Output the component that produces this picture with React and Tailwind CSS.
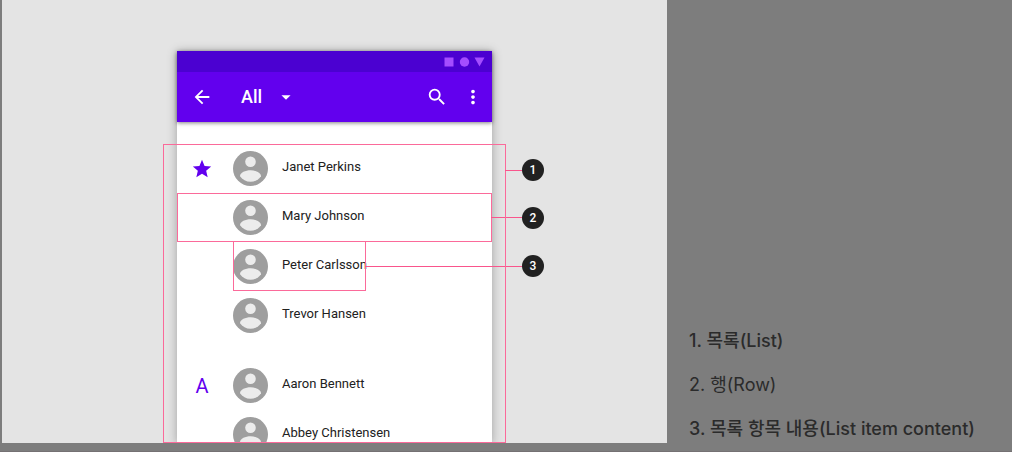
import React, { useState } from "react";
import {
  MdArrowBack,
  MdArrowDropDown,
  MdMoreVert,
  MdSearch,
  MdStar,
} from "react-icons/md";

const contacts = [
  { name: "Janet Perkins", group: "star" },
  { name: "Mary Johnson", marker: "row" },
  { name: "Peter Carlsson", marker: "content" },
  { name: "Trevor Hansen", last: true },
  { name: "Aaron Bennett", group: "A" },
  { name: "Abbey Christensen" },
];

const legend = [
  { text: "1. 목록(List)", strong: true },
  { text: "2. 행(Row)", strong: false },
  { text: "3. 목록 항목 내용(List item content)", strong: true },
];

function Avatar() {
  return (
    <svg viewBox="0 0 35 35" className="w-[35px] h-[35px] shrink-0" aria-hidden="true">
      <circle cx="17.5" cy="17.5" r="17.5" fill="#9e9e9e" />
      <circle cx="17.5" cy="10.7" r="5.3" fill="#ececec" />
      <path
        d="M7 25.2c0-3.6 5.6-5.9 10.5-5.9S28 21.6 28 25.2c-2.4 3.5-6.2 5.5-10.5 5.5S9.4 28.7 7 25.2z"
        fill="#ececec"
      />
    </svg>
  );
}

function Callout({ number, lineClass }) {
  return (
    <div className="flex items-center">
      <div className={`h-px bg-[#f9558c] ${lineClass}`} />
      <span className="w-[22px] h-[22px] rounded-full bg-[#212121] text-white text-[12px] font-medium flex items-center justify-center">
        {number}
      </span>
    </div>
  );
}

function StatusBar() {
  return (
    <div className="h-[21px] bg-[#4b01d1] flex items-center justify-end pr-[7px]">
      <svg viewBox="0 0 41 10" className="w-[41px] h-[10px]" fill="#a44dff" aria-hidden="true">
        <rect x="0.5" y="0.5" width="9" height="9" />
        <circle cx="20.5" cy="5" r="4.7" />
        <path d="M30.5 0.5h10L35.5 9.5z" />
      </svg>
    </div>
  );
}

function AppBar() {
  const [filter, setFilter] = useState("All");

  return (
    <div className="h-[50px] bg-[#6200ee] text-white flex items-center pl-[14px] pr-2">
      <button type="button" aria-label="Back">
        <MdArrowBack className="w-[22px] h-[22px]" />
      </button>
      <div className="relative ml-7 w-14">
        <select
          aria-label="Filter contacts"
          value={filter}
          onChange={(e) => setFilter(e.target.value)}
          className="block w-full appearance-none bg-transparent text-[18px] leading-6 font-medium outline-none"
        >
          <option>All</option>
        </select>
        <MdArrowDropDown className="absolute right-0 top-0 w-[22px] h-6 pointer-events-none" />
      </div>
      <div className="ml-auto flex items-center gap-[14px]">
        <button type="button" aria-label="Search">
          <MdSearch className="w-[22px] h-[22px]" />
        </button>
        <button type="button" aria-label="More options">
          <MdMoreVert className="w-[22px] h-[22px]" />
        </button>
      </div>
    </div>
  );
}

function ContactRow({ contact }) {
  return (
    <li className={`relative h-[49px] flex items-center ${contact.last ? "mb-[21px]" : ""}`}>
      <div className="w-14 pl-[14px] shrink-0 text-[#6200ee]">
        {contact.group === "star" && <MdStar className="w-[22px] h-[22px]" />}
        {contact.group === "A" && (
          <span className="block w-[22px] text-center text-[20px] leading-6">A</span>
        )}
      </div>
      <div className="relative h-full flex items-center gap-[14px]">
        <Avatar />
        <span className="pb-1 text-[13px] leading-4 whitespace-nowrap">{contact.name}</span>
        {contact.marker === "content" && (
          <div className="absolute left-0 inset-y-0 w-[133px] border border-t-0 border-[#fb6a9a]">
            <div className="absolute left-full inset-y-0 flex items-center">
              <Callout number={3} lineClass="w-[157px]" />
            </div>
          </div>
        )}
      </div>
      {contact.marker === "row" && (
        <div className="absolute inset-0 border border-[#fb6a9a]">
          <div className="absolute left-full inset-y-0 flex items-center">
            <Callout number={2} lineClass="w-[31px]" />
          </div>
        </div>
      )}
    </li>
  );
}

export default function App() {
  return (
    <main className="h-screen flex bg-[#7d7d7d] pl-[2px] pb-2 border-b border-[#757173]">
      <figure className="flex-1 overflow-hidden bg-[#e4e4e4] pt-[51px] font-['Roboto',sans-serif]">
        <div className="w-[315px] h-full mx-auto flex flex-col bg-white shadow-[0_1px_10px_rgba(0,0,0,0.3)]">
          <div className="relative shadow-[0_1px_4px_rgba(0,0,0,0.5)]">
            <StatusBar />
            <AppBar />
          </div>
          <div className="relative flex-1 min-h-0 mt-[22px] text-[#212121]">
            <ul>
              {contacts.map((contact) => (
                <ContactRow key={contact.name} contact={contact} />
              ))}
            </ul>
            {/* Outline around the whole list */}
            <div className="absolute inset-y-0 -inset-x-[14px] border border-[#fb6a9a] pointer-events-none">
              <div className="absolute left-full top-3.5">
                <Callout number={1} lineClass="w-[17px]" />
              </div>
            </div>
          </div>
        </div>
      </figure>

      <aside className="w-[345px] shrink-0 flex flex-col justify-end gap-5 pl-[22px] pb-[2px] text-[18px] leading-6 text-[#2b2b2b] font-['Inter','Noto_Sans_CJK_KR',sans-serif]">
        {legend.map((item) => (
          <p key={item.text} className={item.strong ? "font-medium" : "font-normal"}>
            {item.text}
          </p>
        ))}
      </aside>
    </main>
  );
}
